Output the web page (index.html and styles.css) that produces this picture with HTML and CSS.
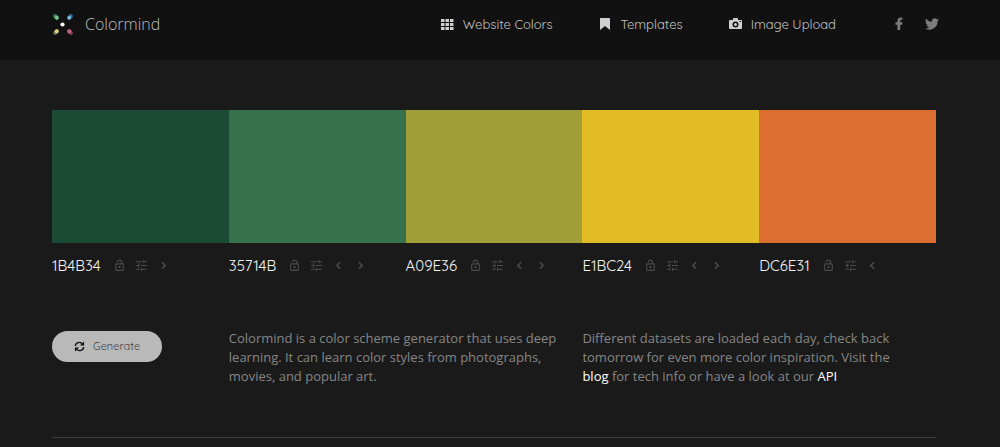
FILE: index.html
```html
<!DOCTYPE html>
<html lang="en">
<head>
<meta charset="utf-8">
<meta name="viewport" content="width=device-width, initial-scale=1">
<title>Colormind</title>
<link rel="stylesheet" href="styles.css">
</head>
<body>
<svg class="sprite" aria-hidden="true">
  <symbol id="lock" viewBox="0 0 24 24"><path fill="currentColor" d="M18 8h-1V6c0-2.800-2.200-5-5-5S7 3.200 7 6h2c0-1.700 1.300-3 3-3s3 1.300 3 3v2H6c-1.100 0-2 .9-2 2v10c0 1.100.9 2 2 2h12c1.100 0 2-.9 2-2V10c0-1.100-.9-2-2-2zm0 12H6V10h12zM7 5h2v4H7zM12 17c1.100 0 2-.9 2-2s-.9-2-2-2-2 .9-2 2 .9 2 2 2z"/></symbol>
  <symbol id="tune" viewBox="0 0 24 24"><path fill="currentColor" d="M2 18v2h7v-2zM2 4v2h11V4zm11 18v-2h9v-2h-9v-2h-2v6zM6 8v3H2v2h4v3h2V8zm16 5v-2H11v2zm-7-5h2V6h5V4h-5V2h-2z"/></symbol>
  <symbol id="left" viewBox="0 0 24 24"><path fill="none" stroke="currentColor" stroke-width="3" d="M15 6l-6 6 6 6"/></symbol>
  <symbol id="right" viewBox="0 0 24 24"><path fill="none" stroke="currentColor" stroke-width="3" d="M9 6l6 6-6 6"/></symbol>
</svg>
<header class="header">
  <a class="brand" href="#">
    <svg class="logo" viewBox="0 0 22 22" aria-hidden="true">
      <g transform="rotate(45 4 4)"><ellipse cx="4" cy="4" rx="3.300" ry="2.200" fill="#3f7a50"/><ellipse cx="5" cy="4" rx="2" ry="1.900" fill="#7cc492"/></g>
      <g transform="rotate(-45 18 4)"><ellipse cx="18" cy="4" rx="3.300" ry="2.200" fill="#37628c"/><ellipse cx="17" cy="4" rx="2" ry="1.900" fill="#71b4dc"/></g>
      <g transform="rotate(-45 4 19)"><ellipse cx="4" cy="19" rx="3.300" ry="2.200" fill="#776b53"/><ellipse cx="5" cy="19" rx="2" ry="1.900" fill="#e2d47b"/></g>
      <g transform="rotate(45 18 19)"><ellipse cx="18" cy="19" rx="3.300" ry="2.200" fill="#863d5d"/><ellipse cx="17" cy="19" rx="2" ry="1.900" fill="#bd628c"/></g>
      <circle cx="10.500" cy="11.500" r="2.100" fill="#fff"/>
    </svg>
    <span>Colormind</span>
  </a>
  <nav class="nav">
    <a href="#"><svg class="nav-icon" viewBox="0 0 13 13" aria-hidden="true"><path fill="currentColor" d="M0 1h3.500v3H0zm4.500 0H8v3H4.500zM9 1h3.500v3H9zM0 5h3.500v3H0zm4.500 0H8v3H4.500zM9 5h3.500v3H9zM0 9h3.500v3H0zm4.500 0H8v3H4.500zM9 9h3.500v3H9z"/></svg>Website Colors</a>
    <a href="#"><svg class="nav-icon" viewBox="0 0 13 13" aria-hidden="true"><path fill="currentColor" d="M1 .5Q1 0 1.500 0h9q.5 0 .5.500V12L6 8 1 12z"/></svg>Templates</a>
    <a href="#"><svg class="nav-icon" viewBox="0 0 13 13" aria-hidden="true"><path fill="currentColor" fill-rule="evenodd" d="M4 1Q4 0 5 0h3q1 0 1 1v1h3q1 0 1 1v7q0 1-1 1H1q-1 0-1-1V3q0-1 1-1h3zM6.500 3.500a3 3 0 1 0 0 6 3 3 0 0 0 0-6zm0 1.500a1.500 1.500 0 1 1 0 3 1.500 1.500 0 0 1 0-3zM10.500 3v1H12V3z"/></svg>Image Upload</a>
  </nav>
  <div class="social">
    <a href="#" aria-label="Facebook"><svg viewBox="0 0 14 14" aria-hidden="true"><path fill="currentColor" d="M5.500 13V7.700H3.500V5.200h2V3.700C5.500 1.400 6.800.5 8.500.5h1.800v2.200H9.300c-.9 0-1.100.4-1.100 1.100v1.400h2.300L10.200 7.700h-2V13z"/></svg></a>
    <a href="#" aria-label="Twitter"><svg viewBox="0 0 24 24" aria-hidden="true"><path fill="currentColor" d="M24 4.600a10 10 0 0 1-2.800.8 5 5 0 0 0 2.100-2.700 10 10 0 0 1-3.100 1.200 4.900 4.900 0 0 0-8.400 4.500A14 14 0 0 1 1.700 3.200a4.900 4.900 0 0 0 1.500 6.500 5 5 0 0 1-2.200-.6v.1a4.900 4.900 0 0 0 3.900 4.800 5 5 0 0 1-2.200.1 4.900 4.900 0 0 0 4.600 3.400A9.900 9.900 0 0 1 0 19.500a14 14 0 0 0 21.500-12.400A10 10 0 0 0 24 4.600z"/></svg></a>
  </div>
</header>
<main class="main">
  <section class="palette" aria-label="Palette">
    <div class="color"><div class="swatch green-dark"></div><div class="tools"><span class="hex">1B4B34</span><button aria-label="Lock"><svg><use href="#lock"/></svg></button><button aria-label="Adjust"><svg><use href="#tune"/></svg></button><button aria-label="Move right"><svg><use href="#right"/></svg></button></div></div>
    <div class="color"><div class="swatch green"></div><div class="tools"><span class="hex">35714B</span><button aria-label="Lock"><svg><use href="#lock"/></svg></button><button aria-label="Adjust"><svg><use href="#tune"/></svg></button><button aria-label="Move left"><svg><use href="#left"/></svg></button><button aria-label="Move right"><svg><use href="#right"/></svg></button></div></div>
    <div class="color"><div class="swatch olive"></div><div class="tools"><span class="hex">A09E36</span><button aria-label="Lock"><svg><use href="#lock"/></svg></button><button aria-label="Adjust"><svg><use href="#tune"/></svg></button><button aria-label="Move left"><svg><use href="#left"/></svg></button><button aria-label="Move right"><svg><use href="#right"/></svg></button></div></div>
    <div class="color"><div class="swatch yellow"></div><div class="tools"><span class="hex">E1BC24</span><button aria-label="Lock"><svg><use href="#lock"/></svg></button><button aria-label="Adjust"><svg><use href="#tune"/></svg></button><button aria-label="Move left"><svg><use href="#left"/></svg></button><button aria-label="Move right"><svg><use href="#right"/></svg></button></div></div>
    <div class="color"><div class="swatch orange"></div><div class="tools"><span class="hex">DC6E31</span><button aria-label="Lock"><svg><use href="#lock"/></svg></button><button aria-label="Adjust"><svg><use href="#tune"/></svg></button><button aria-label="Move left"><svg><use href="#left"/></svg></button></div></div>
  </section>
  <section class="intro">
    <div><button class="generate"><svg viewBox="0 0 24 24" aria-hidden="true"><path fill="none" stroke="currentColor" stroke-width="3" d="M3 11C3 3 14 0 19 7M21 13c0 8-11 11-16 4"/><path fill="currentColor" d="M22 1v9h-9zM2 23v-9h9z"/></svg>Generate</button></div>
    <p>Colormind is a color scheme generator that uses deep learning. It can learn color styles from photographs, movies, and popular art.</p>
    <p>Different datasets are loaded each day, check back tomorrow for even more color inspiration. Visit the <a href="#">blog</a> for tech info or have a look at our <a href="#">API</a></p>
  </section>
</main>
</body>
</html>
```
FILE: styles.css
```css
* { box-sizing: border-box; }
body {
  margin: 0;
  background: #1a1a1a;
  color: #868686;
  font: 13px/19px "Open Sans", "Noto Sans", sans-serif;
}
a { color: inherit; text-decoration: none; }
button { border: 0; padding: 0; background: none; color: inherit; font: inherit; cursor: pointer; }
svg { display: block; }
.sprite { position: absolute; width: 0; height: 0; }
.header {
  display: flex;
  align-items: center;
  height: 60px;
  padding: 0 61px 12px 52px;
  background: #111;
}
.brand {
  display: flex;
  align-items: center;
  gap: 11px;
  margin-right: auto;
  color: #bcbcbc;
  font-size: 16px;
  font-weight: 300;
}
.logo { width: 22px; height: 22px; }
.nav {
  display: flex;
  gap: 46px;
  color: #c4c4c4;
  font-family: Quicksand, Lato, sans-serif;
  font-size: 13px;
}
.nav a { display: flex; align-items: center; gap: 9px; }
.nav-icon { width: 13px; height: 13px; color: #d0d0d0; }
.social { display: flex; gap: 19px; margin-left: 56px; color: #7c7c7c; }
.social svg { width: 14px; height: 14px; }
.main { margin: 50px 64px 0 52px; }
.palette { display: grid; grid-template-columns: repeat(5, 1fr); }
.swatch { height: 133px; }
.green-dark { background: #1b4b34; }
.green { background: #35714b; }
.olive { background: #a09e36; }
.yellow { background: #e1bc24; }
.orange { background: #dc6e31; }
.tools { display: flex; align-items: center; gap: 9px; padding-top: 13px; color: #4c4c4c; }
.tools svg { width: 13px; height: 13px; }
.hex {
  margin-right: 3px;
  color: #f4f4f4;
  font-family: Quicksand, Lato, sans-serif;
  font-size: 15px;
}
.intro {
  display: grid;
  grid-template-columns: 1fr 2fr 2fr;
  padding: 54px 0 51px;
  border-bottom: 1px solid #3c3c3c;
}
.intro p { margin: 0; padding-right: 20px; }
.intro a { color: #fff; }
.generate {
  display: flex;
  align-items: center;
  gap: 8px;
  margin-top: 2px;
  padding: 6px 22px;
  border-radius: 16px;
  background: #b9b9b9;
  color: #444;
  font-family: Quicksand, Lato, sans-serif;
  font-size: 11px;
}
.generate svg { width: 11px; height: 11px; color: #111; }
```
